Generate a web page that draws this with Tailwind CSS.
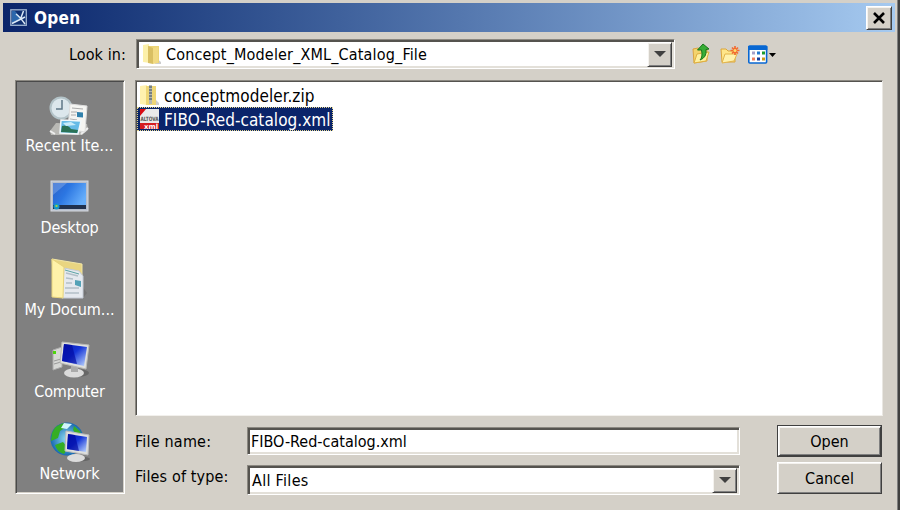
<!DOCTYPE html>
<html lang="en">
<head>
  <meta charset="UTF-8" />
  <meta name="viewport" content="width=device-width, initial-scale=1.0"/>
  <title>Open</title>
  <script src="https://cdn.jsdelivr.net/npm/@tailwindcss/browser@4"></script>
  <style>
    body {
      font-family: 'DejaVu Sans Condensed', 'DejaVu Sans', sans-serif;
      font-stretch: condensed;
    }
    .sunken {
      border: 1px solid;
      border-color: #8b8881 #fff #fff #8b8881;
      box-shadow: inset 2px 2px 0 #55534f, inset -2px -2px 0 #e3e0d9;
    }
    .panel {
      border: 1px solid;
      border-color: #8b8881 #fff #fff #8b8881;
      box-shadow: inset 1px 1px 0 #4a4a4a, inset -1px -1px 0 #d4d0c8;
    }
    .list {
      border: 1px solid;
      border-color: #8b8881 #e9e7e2 #f2f0ec #8b8881;
      box-shadow: inset 1px 1px 0 #55534f;
    }
    .raised {
      border: 1px solid;
      border-color: #fff #404040 #404040 #fff;
      box-shadow: inset 1px 1px 0 #f4f2ee, inset -1px -1px 0 #808080;
    }
  </style>
</head>
<body class="bg-[#d4d0c8] text-black">
  <div class="w-[900px] h-[510px] overflow-hidden flex flex-col pt-[3px] pl-[3px] border-r-2 border-[#404040] shadow-[inset_-1px_0_0_#808080]">
    <!-- title bar -->
    <div class="w-[892px] h-[29px] flex items-center pl-[7px] pr-[3px] bg-linear-to-r from-[#0a246a] to-[#a6caf0]">
      <svg class="w-[18px] h-[18px] mt-px" viewBox="0 0 18 18">
        <rect x=".8" y=".8" width="15.5" height="15.5" fill="#0f2f70" stroke="#9fb4d0" stroke-width="1.3"/>
        <path d="M2 2h3l6 7-7 5H2z" fill="#2c67ac"/>
        <path d="M2 14.500L15 8M6 5q4 3 9 10M13.500 2l-3 8" stroke="#dbe8f5" stroke-width="1.500" fill="none"/>
      </svg>
      <span class="ml-[6px] text-[17px] leading-[24px] font-bold text-white tracking-[0.3px]">Open</span>
      <button class="raised ml-auto w-[26px] h-[24px] bg-[#d4d0c8] flex items-center justify-center">
        <svg class="w-3 h-3" viewBox="0 0 12 12"><path d="M1 1l10 10M11 1L1 11" stroke="#000" stroke-width="2.6"/></svg>
      </button>
    </div>

    <!-- look in -->
    <div class="flex items-center h-[30px] mt-[7px] text-[16px]">
      <span class="w-[123px] pt-px text-right tracking-[0.1px]">Look in:</span>
      <div class="sunken ml-[10px] w-[539px] h-[30px] bg-white flex items-center pl-[5px] pr-[2px]">
        <svg class="w-[20px] h-[22px]" viewBox="0 0 20 22">
          <path d="M14 15l5 4v2h-6z" fill="#ccc"/>
          <path d="M1 2l6-1 1 19-7-1z" fill="#fcf0a9"/>
          <path d="M6 3h11v17H6z" fill="#ecd477"/>
          <path d="M6 3l5 2v16l-5-1z" fill="#d9bf62"/>
          <path d="M11 5l5-1v16l-5 1z" fill="#f1da82"/>
        </svg>
        <span class="ml-[4px] pt-px tracking-[0.16px]">Concept_Modeler_XML_Catalog_File</span>
        <span class="raised ml-auto w-[25px] h-[25px] bg-[#d4d0c8] flex items-center justify-center">
          <svg class="w-3 h-[6px]" viewBox="0 0 12 6"><path d="M0 0h12L6 6z" fill="#404040"/></svg>
        </span>
      </div>
      <svg class="ml-[17px] w-[19px] h-[22px]" viewBox="0 0 19 22">
        <path d="M1 6l5-1 2 1h7v12L2 20z" fill="#f3d36c" stroke="#dba440"/>
        <path d="M5 11l12-2-3 9L2 20z" fill="#fff0a0" stroke="#dfb040"/>
        <path d="M8 17q3-3 1.500-10H5.500L11 1l6 5-3 .5q1 8-6 10.500z" fill="#38ad36" stroke="#17771b"/>
      </svg>
      <svg class="ml-[9px] w-[20px] h-[19px]" viewBox="0 0 20 19">
        <path d="M1 4h5l2 2h7v11H2z" fill="#ffe68a" stroke="#dca63b"/>
        <path d="M5 9h12l-3 7-12 2z" fill="#fff2ad" stroke="#e3b44b"/>
        <path d="M15 1v9M10.500 5.500h9M12 2.500l6 6M18 2.500l-6 6" stroke="#f36b31" stroke-width="1.700"/>
        <circle cx="15" cy="5.500" r="1.500" fill="#ffdf6b"/>
      </svg>
      <svg class="ml-[8px] w-[28px] h-[19px]" viewBox="0 0 28 19">
        <rect x=".8" y="1" width="17.800" height="17" rx="1" fill="#fff" stroke="#0867d2" stroke-width="1.600"/>
        <path d="M0 1h19.400v4H0z" fill="#0867d2"/>
        <path d="M4 6.500h3v3H4z" fill="#a6a0c8"/><path d="M9 6.500h3v3H9z" fill="#277bd0"/><path d="M14 6.500h3v3h-3z" fill="#1b9b2c"/>
        <path d="M4 12.500h3v3H4z" fill="#f08060"/><path d="M9 12.500h3v3H9z" fill="#163c9a"/><path d="M14 12.500h3v3h-3z" fill="#c99a1a"/>
        <path d="M21 8h7l-3.500 4z" fill="#000"/>
      </svg>
    </div>

    <div class="flex mt-[11px]">
      <!-- places bar -->
      <div class="panel ml-[12px] w-[110px] h-[414px] bg-[#808080] flex flex-col items-center pt-[13px] pr-px text-white text-[16px] leading-[20px]">
        <div class="h-[82px] shrink-0 flex flex-col items-center">
          <svg class="w-[42px] h-[42px]" viewBox="0 0 42 42">
            <path d="M2 37l6-8 31 1 1 6-6 5H3z" fill="#b9b9b5"/>
            <path d="M2 37l5 3M33 40l7-6" stroke="#eee" stroke-width="2"/>
            <circle cx="13" cy="14" r="10.500" fill="#dce7ec" stroke="#b3c3c8" stroke-width="2"/>
            <path d="M14 6v9H8" stroke="#5f7886" stroke-width="1.500" fill="none"/>
            <path d="M22 10l17 2-2 26-17-3z" fill="#f5f5f2" stroke="#ddd"/>
            <path d="M24 14l11 1M23 18h6M23 21h5M22 25l7 1" stroke="#aaa"/>
            <path d="M29 18l6 .5v5l-6-.5z" fill="#3181ac"/>
            <path d="M13 26l20 1-3 13-18-1z" fill="#65bbe7" stroke="#f2f8fa" stroke-width="1.500"/>
            <path d="M14 32q6-2 9 3l7 1-1 3-16-1z" fill="#2a7256"/><path d="M15 29l8-1 5 3-10 1z" fill="#c8ecfa"/>
          </svg>
          <span class="tracking-[0.1px]">Recent Ite...</span>
        </div>
        <div class="h-[82px] shrink-0 flex flex-col items-center">
          <svg class="w-[42px] h-[42px]" viewBox="0 0 42 42">
            <defs><linearGradient id="desk" x2="1" y2=".5"><stop stop-color="#2a60c9"/><stop offset=".45" stop-color="#2b76e2"/><stop offset="1" stop-color="#66aefb"/></linearGradient></defs>
            <rect x="2" y="5" width="37" height="30" fill="#b4bdcc" stroke="#d6d9df"/>
            <rect x="4" y="7" width="33" height="26" fill="url(#desk)"/>
            <path d="M4 7h14L4 19z" fill="#82a9e8" opacity=".5"/>
            <path d="M4 29h33v4H4z" fill="#20314e"/>
            <circle cx="7.500" cy="30.500" r="3" fill="#1598c9"/><path d="M6.500 29h2v2h-2z" fill="#a8cf41"/>
          </svg>
          <span class="tracking-[-0.2px]">Desktop</span>
        </div>
        <div class="h-[82px] shrink-0 flex flex-col items-center">
          <svg class="w-[42px] h-[42px]" viewBox="0 0 42 42">
            <path d="M34 28l5 7-4 5h-6z" fill="#737373"/>
            <path d="M4 1l30 5v32H7z" fill="#e9d581" stroke="#f2e6a6"/>
            <path d="M16 10l15 3 4 5v22H14z" fill="#e5e9ef" stroke="#c5cbd5"/>
            <path d="M18 15l12 3M18 20l7 1M18 25h6M17 30h14M17 35h14" stroke="#b2bfc8" stroke-width="1.500"/>
            <path d="M17 12l14 4" stroke="#5ca4a5"/><path d="M27 22l6 1v6l-6-2z" fill="#54a2b7"/>
            <path d="M4 1l12 8-1 31-11-1z" fill="#fff2a9" stroke="#e7d37c"/>
          </svg>
          <span>My Docum...</span>
        </div>
        <div class="h-[82px] shrink-0 flex flex-col items-center">
          <svg class="w-[42px] h-[42px]" viewBox="0 0 42 42">
            <defs><linearGradient id="scr" x2="1" y2="1"><stop stop-color="#0719b0"/><stop offset=".45" stop-color="#1434d7"/><stop offset="1" stop-color="#c2dbff"/></linearGradient></defs>
            <path d="M4 10l9-3v20l-9 3z" fill="#d6d7d5" stroke="#aaa"/><path d="M4 11h3v3H4z" fill="#4dd50b"/>
            <path d="M5 21l7-2M5 24l7-2" stroke="#999"/>
            <ellipse cx="28" cy="33" rx="12" ry="4" fill="#676767"/><ellipse cx="25" cy="33" rx="10" ry="4.500" fill="#dbdbdb"/>
            <path d="M22 25h7v7h-7z" fill="#aaa"/>
            <path d="M13 2l27 3-3 24-26-6z" fill="#dfe0dd" stroke="#b9b9b5"/>
            <path d="M15 4l23 3-3 19-22-5z" fill="url(#scr)"/><path d="M15 4l8 1 5 19-15-3z" fill="#0008a0" opacity=".65"/>
          </svg>
          <span class="tracking-[-0.15px]">Computer</span>
        </div>
        <div class="h-[82px] shrink-0 flex flex-col items-center">
          <svg class="w-[42px] h-[42px]" viewBox="0 0 42 42">
            <defs><radialGradient id="globe"><stop stop-color="#93e0f4"/><stop offset="1" stop-color="#1769b2"/></radialGradient></defs>
            <circle cx="18" cy="17" r="16.500" fill="url(#globe)"/>
            <path d="M3 11q3-8 12-10l2 4-6 4-2 7-7 3zM6 23l8-3 5 6-4 6q-7-2-9-9zM25 4l7 6-4 3-4-5z" fill="#35ae24"/>
            <path d="M15 1l8 1-5 5-6-1z" fill="#d2f5fb"/>
            <ellipse cx="30" cy="37" rx="11" ry="2.500" fill="#666"/><ellipse cx="27" cy="36" rx="9" ry="4" fill="#dcdcdc"/>
            <path d="M17 9l23 4-1 20-23-4z" fill="#dedfdd" stroke="#bbb"/>
            <path d="M19 12l19 3-1 15-19-3z" fill="url(#scr)"/><path d="M19 12l7 1 4 16-12-2z" fill="#0008a0" opacity=".65"/>
          </svg>
          <span>Network</span>
        </div>
      </div>

      <div class="ml-[10px] w-[748px]">
        <!-- file list -->
        <div class="list h-[336px] bg-white pt-[2px] pl-px text-[17px] leading-[24px]">
          <div class="h-[24px] flex items-center pl-px">
            <svg class="w-[22px] h-[22px]" viewBox="0 0 22 22">
              <path d="M16 14l5 5v2h-7z" fill="#ccc"/>
              <path d="M2 2l7-1v20l-7-1z" fill="#fff1ae"/><path d="M8 2h10v19H8z" fill="#eed676"/>
              <path d="M11 1h3v19h-3z" fill="#b5b8b0"/><path d="M11 3h3M11 6h3M11 9h3M11 12h3M11 15h3" stroke="#35465a"/>
            </svg>
            <span class="ml-[4px] pt-px tracking-[0.05px]">conceptmodeler.zip</span>
          </div>
          <div class="h-[24px] w-[196px] flex items-center bg-[#0a246a] text-white border border-dotted border-[#e4d68e]">
            <svg class="w-[20px] h-[22px] ml-px" viewBox="0 0 20 22">
              <path d="M1 1h19v20H1z" fill="#e9e9e9"/><path d="M1 1h6L1 8z" fill="#d80b12"/>
              <path d="M1 15h19v6H1z" fill="#d51c20"/>
              <text x="1.500" y="12.500" font-size="6" font-weight="bold" textLength="18" lengthAdjust="spacingAndGlyphs" fill="#555">ALTOVA</text>
              <text x="5" y="20.500" font-size="7" font-weight="bold" textLength="14" lengthAdjust="spacingAndGlyphs" fill="#fff">xml</text>
            </svg>
            <span class="ml-[5px] pt-px tracking-[0.05px]">FIBO-Red-catalog.xml</span>
          </div>
        </div>

        <div class="flex mt-[9px] text-[16px]">
          <div class="w-[605px]">
            <div class="flex mt-[2px] h-[28px] items-center">
              <span class="w-[112px] pt-px tracking-[0.2px]">File name:</span>
              <input type="text" value="FIBO-Red-catalog.xml" class="sunken w-[493px] h-[28px] bg-white pl-[3px] outline-none"/>
            </div>
            <div class="flex mt-[10px] h-[30px]">
              <span class="w-[112px] tracking-[0.15px]">Files of type:</span>
              <div class="sunken w-[493px] h-[30px] bg-white flex items-center pl-[4px] pr-[2px]">
                <span class="pt-px tracking-[0.3px]">All Files</span>
                <span class="raised ml-auto w-[25px] h-[25px] bg-[#d4d0c8] flex items-center justify-center">
                  <svg class="w-3 h-[6px]" viewBox="0 0 12 6"><path d="M0 0h12L6 6z" fill="#404040"/></svg>
                </span>
              </div>
            </div>
          </div>
          <div class="ml-[37px] w-[105px] flex flex-col gap-[5px]">
            <div class="border border-[#404040] h-[32px] flex">
              <button class="raised w-full pt-px">Open</button>
            </div>
            <button class="raised h-[32px] pt-px">Cancel</button>
          </div>
        </div>
      </div>
    </div>
  </div>
</body>
</html>
